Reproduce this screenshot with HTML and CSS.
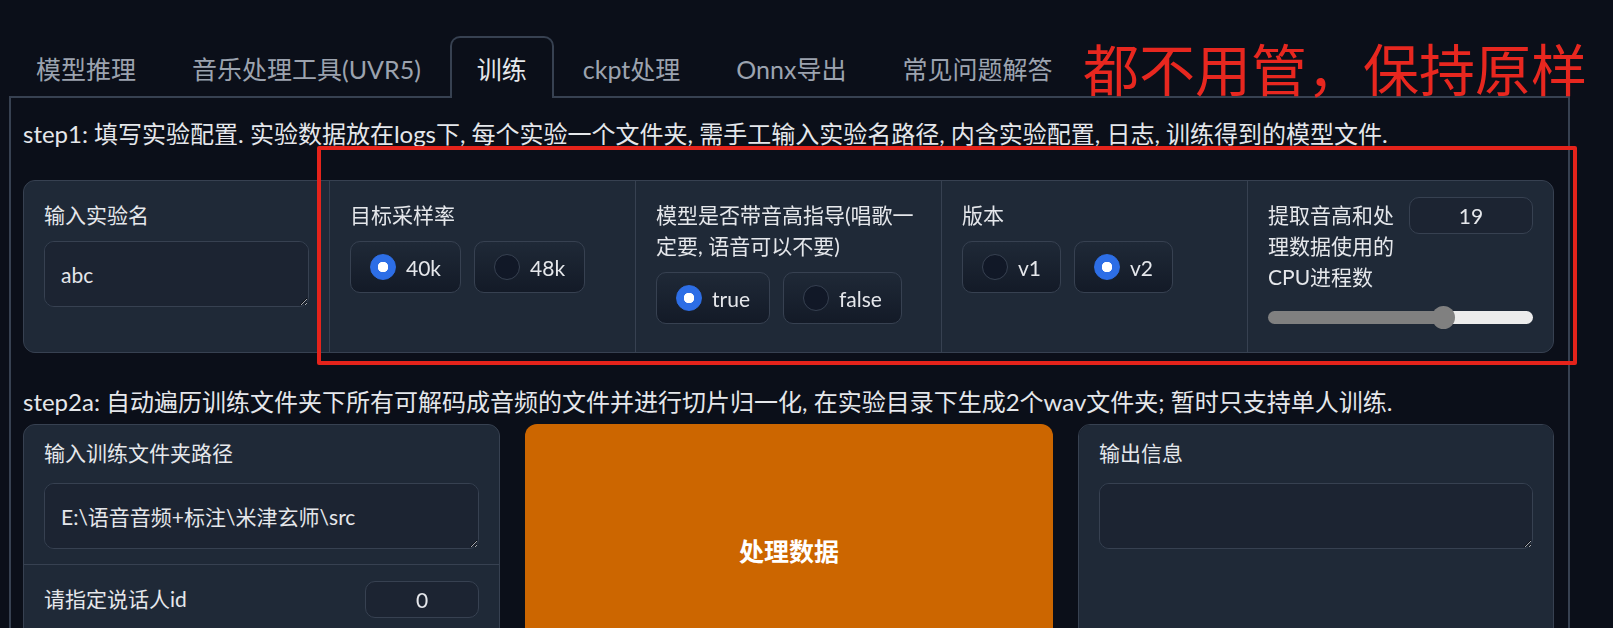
FILE: index.html
```html
<!DOCTYPE html>
<html lang="zh-CN">
<head>
    <meta charset="UTF-8">
    <meta name="viewport" content="width=device-width, initial-scale=1.0">
    <title>RVC WebUI - 训练</title>
    <link rel="stylesheet" href="styles.css">
</head>
<body>
    <div class="app">
        <nav class="tab-nav">
            <button class="tab">模型推理</button>
            <button class="tab">音乐处理工具(UVR5)</button>
            <button class="tab active">训练</button>
            <button class="tab">ckpt处理</button>
            <button class="tab">Onnx导出</button>
            <button class="tab">常见问题解答</button>
        </nav>

        <div class="tab-panel">
            <p class="step">step1: 填写实验配置. 实验数据放在logs下, 每个实验一个文件夹, 需手工输入实验名路径, 内含实验配置, 日志, 训练得到的模型文件.</p>

            <div class="form-row">
                <div class="col">
                    <label class="field-label" for="exp-name">输入实验名</label>
                    <textarea id="exp-name" class="text-input">abc</textarea>
                </div>
                <div class="col">
                    <span class="field-label">目标采样率</span>
                    <div class="radio-group">
                        <label class="radio"><input type="radio" name="sr" checked><span>40k</span></label>
                        <label class="radio"><input type="radio" name="sr"><span>48k</span></label>
                    </div>
                </div>
                <div class="col">
                    <span class="field-label">模型是否带音高指导(唱歌一定要, 语音可以不要)</span>
                    <div class="radio-group">
                        <label class="radio"><input type="radio" name="f0" checked><span>true</span></label>
                        <label class="radio"><input type="radio" name="f0"><span>false</span></label>
                    </div>
                </div>
                <div class="col">
                    <span class="field-label">版本</span>
                    <div class="radio-group">
                        <label class="radio"><input type="radio" name="ver"><span>v1</span></label>
                        <label class="radio"><input type="radio" name="ver" checked><span>v2</span></label>
                    </div>
                </div>
                <div class="col">
                    <div class="cpu-head">
                        <label class="field-label" for="np">提取音高和处理数据使用的CPU进程数</label>
                        <input id="np" class="num-input" type="number" value="19">
                    </div>
                    <input class="slider" type="range" min="0" max="28" value="19" style="--fill: 67%">
                </div>
            </div>

            <p class="step step-second">step2a: 自动遍历训练文件夹下所有可解码成音频的文件并进行切片归一化, 在实验目录下生成2个wav文件夹; 暂时只支持单人训练.</p>

            <div class="process-row">
                <div class="form-stack">
                    <div class="block">
                        <label class="field-label" for="trainset">输入训练文件夹路径</label>
                        <textarea id="trainset" class="text-input">E:\语音音频+标注\米津玄师\src</textarea>
                    </div>
                    <div class="block inline-block">
                        <label class="field-label" for="spk">请指定说话人id</label>
                        <input id="spk" class="num-input small" type="number" value="0">
                    </div>
                </div>

                <button class="primary-btn">处理数据</button>

                <div class="form-stack">
                    <div class="block">
                        <label class="field-label" for="info1">输出信息</label>
                        <textarea id="info1" class="text-input"></textarea>
                    </div>
                </div>
            </div>
        </div>
    </div>

    <!-- red note drawn on top of the config row -->
    <div class="note-box"></div>
    <div class="note-text">都不用管，保持原样</div>
</body>
</html>
```

FILE: styles.css
```css
* {
    box-sizing: border-box;
}
html, body {
    overflow: hidden;
    color-scheme: dark;
}
body {
    margin: 0;
    background-color: #0b0f19;
    color: #e5e7eb;
    font-family: Lato, "Noto Sans CJK SC", sans-serif;
}
.app {
    width: 1570px;
    padding: 36px 0 0 9px;
}

/* tabs */
.tab-nav {
    display: flex;
    height: 60px;
}
.tab {
    height: 62px;
    padding: 0 25px;
    margin-right: 2px;
    font-family: inherit;
    font-size: 25px;
    color: #9ca3af;
    background: none;
    border: 2px solid transparent;
    border-bottom: none;
    border-radius: 10px 10px 0 0;
    cursor: pointer;
}
.tab.active {
    position: relative;
    z-index: 1;
    color: #e5e7eb;
    background-color: #0b0f19;
    border-color: #374151;
}
.tab-panel {
    border: 2px solid #374151;
    padding: 18px 14px 0 12px;
    min-height: 700px;
}

.step {
    margin: 0 0 28px;
    font-size: 24px;
    line-height: 36px;
}
.step-second {
    margin: 31px 0 4px;
}

/* first row: experiment config */
.form-row {
    display: flex;
    gap: 1px;
    background-color: #374151;
    border: 1px solid #374151;
    border-radius: 12px;
    overflow: hidden;
}
.col {
    flex: 1;
    min-width: 0;
    background-color: #1f2937;
    padding: 18px 20px 23px;
}
.field-label {
    display: block;
    font-size: 21px;
    line-height: 31px;
    margin-bottom: 11px;
    color: #e5e7eb;
}
.text-input {
    display: block;
    width: 100%;
    height: 66px;
    padding: 17px 16px;
    font-family: inherit;
    font-size: 21px;
    line-height: 31px;
    color: #e5e7eb;
    background-color: #1c2432;
    border: 1px solid #374151;
    border-radius: 10px;
    resize: vertical;
    outline: none;
}
.num-input {
    width: 124px;
    height: 37px;
    padding: 0 10px;
    font-family: inherit;
    font-size: 21px;
    text-align: center;
    color: #e5e7eb;
    background-color: #1c2432;
    border: 1px solid #374151;
    border-radius: 10px;
    outline: none;
    -moz-appearance: textfield;
}
.num-input::-webkit-inner-spin-button,
.num-input::-webkit-outer-spin-button {
    -webkit-appearance: none;
    margin: 0;
}
.num-input.small {
    width: 114px;
}

.radio-group {
    display: flex;
    flex-wrap: wrap;
    gap: 13px;
}
.radio {
    display: inline-flex;
    align-items: center;
    gap: 10px;
    height: 52px;
    padding: 0 19px;
    font-size: 21px;
    border: 1px solid #374151;
    border-radius: 10px;
    background: linear-gradient(to bottom, #1f2937, #131a27);
    cursor: pointer;
}
.radio input {
    appearance: none;
    -webkit-appearance: none;
    width: 26px;
    height: 26px;
    margin: 0;
    border-radius: 50%;
    border: 1px solid #374151;
    background-color: #111827;
}
.radio input:checked {
    border-color: #2d6ee6;
    background: radial-gradient(circle, #fff 0 5px, #2d6ee6 5.5px);
}

.cpu-head {
    display: flex;
    align-items: flex-start;
    gap: 12px;
    margin-bottom: 14px;
}
.cpu-head .field-label {
    flex: 1;
    margin-bottom: 0;
}
.cpu-head .num-input {
    margin-top: -2px;
}

.slider {
    -webkit-appearance: none;
    appearance: none;
    display: block;
    width: 100%;
    height: 23px;
    margin: 0;
    background: transparent;
}
.slider::-webkit-slider-runnable-track {
    height: 13px;
    border-radius: 7px;
    background: linear-gradient(to right, #808080 var(--fill), #ececec var(--fill));
}
.slider::-webkit-slider-thumb {
    -webkit-appearance: none;
    width: 23px;
    height: 23px;
    margin-top: -5px;
    border-radius: 50%;
    background-color: #808080;
}

/* second row: preprocess */
.process-row {
    display: grid;
    grid-template-columns: 477px 528px 1fr;
    gap: 25px;
}
.form-stack {
    display: flex;
    flex-direction: column;
    gap: 1px;
    background-color: #374151;
    border: 1px solid #374151;
    border-radius: 12px;
    overflow: hidden;
}
.block {
    background-color: #1f2937;
    padding: 12px 20px 15px;
}
.block .field-label {
    margin-bottom: 15px;
}
.form-stack .block:last-child {
    flex: 1;
}
.inline-block {
    display: flex;
    align-items: flex-start;
    justify-content: space-between;
    padding-top: 16px;
}
.inline-block .field-label {
    margin: 2px 0 0;
}
.primary-btn {
    min-height: 251px;
    font-family: inherit;
    font-size: 25px;
    font-weight: bold;
    color: #fff;
    background-color: #cc6600;
    border: none;
    border-radius: 12px;
    cursor: pointer;
}

/* annotation */
.note-box {
    position: absolute;
    left: 317px;
    top: 146px;
    width: 1260px;
    height: 219px;
    border: 4px solid #e5231b;
    border-radius: 2px;
}
.note-text {
    position: absolute;
    left: 1083px;
    top: 39px;
    font-family: "Noto Sans CJK SC", sans-serif;
    font-size: 56px;
    line-height: 1;
    color: #e8271f;
    white-space: nowrap;
}
```
